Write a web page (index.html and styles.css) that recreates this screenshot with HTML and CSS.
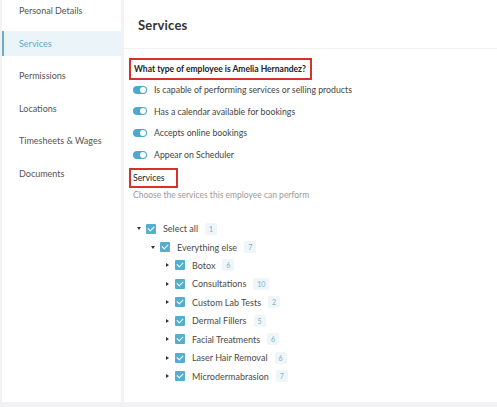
FILE: index.html
```html
<!DOCTYPE html>
<html>
<head>
<meta charset="utf-8">
<link rel="stylesheet" href="styles.css">
</head>
<body>
<div class="app">
  <nav class="sidebar">
    <div class="nav-item">Personal Details</div>
    <div class="nav-item active">Services</div>
    <div class="nav-item">Permissions</div>
    <div class="nav-item">Locations</div>
    <div class="nav-item">Timesheets &amp; Wages</div>
    <div class="nav-item">Documents</div>
  </nav>
  <main class="main">
    <header class="header"><h1 class="title">Services</h1></header>
    <section class="content">
      <div class="question"><span class="marked">What type of employee is Amelia Hernandez?</span></div>
      <div class="toggles">
        <div class="toggle-row"><span class="toggle"></span><span>Is capable of performing services or selling products</span></div>
        <div class="toggle-row"><span class="toggle"></span><span>Has a calendar available for bookings</span></div>
        <div class="toggle-row"><span class="toggle"></span><span>Accepts online bookings</span></div>
        <div class="toggle-row"><span class="toggle"></span><span>Appear on Scheduler</span></div>
      </div>
      <div class="sub-title"><span class="marked small">Services</span></div>
      <div class="hint">Choose the services this employee can perform</div>
      <div class="tree">
        <div class="tree-row lvl0"><span class="caret down"></span><span class="check"></span><span class="label">Select all</span><span class="badge">1</span></div>
        <div class="tree-row lvl1"><span class="caret down"></span><span class="check"></span><span class="label">Everything else</span><span class="badge">7</span></div>
        <div class="tree-row lvl2"><span class="caret"></span><span class="check"></span><span class="label">Botox</span><span class="badge">6</span></div>
        <div class="tree-row lvl2"><span class="caret"></span><span class="check"></span><span class="label">Consultations</span><span class="badge">10</span></div>
        <div class="tree-row lvl2"><span class="caret"></span><span class="check"></span><span class="label">Custom Lab Tests</span><span class="badge">2</span></div>
        <div class="tree-row lvl2"><span class="caret"></span><span class="check"></span><span class="label">Dermal Fillers</span><span class="badge">5</span></div>
        <div class="tree-row lvl2"><span class="caret"></span><span class="check"></span><span class="label">Facial Treatments</span><span class="badge">6</span></div>
        <div class="tree-row lvl2"><span class="caret"></span><span class="check"></span><span class="label">Laser Hair Removal</span><span class="badge">6</span></div>
        <div class="tree-row lvl2"><span class="caret"></span><span class="check"></span><span class="label">Microdermabrasion</span><span class="badge">7</span></div>
      </div>
    </section>
  </main>
</div>
</body>
</html>
```
FILE: styles.css
```css
* { box-sizing: border-box; }
html, body { margin: 0; padding: 0; }
body {
  background: #f2f2f4;
  font-family: Lato, "Open Sans", sans-serif;
  color: #444;
  width: 497px;
  height: 407px;
  overflow: hidden;
}
.app {
  display: flex;
  height: 402px;
  padding-left: 2px;
  gap: 3px;
}
.sidebar {
  width: 119px;
  background: #fff;
  display: flex;
  flex-direction: column;
  margin-top: -2px;
}
.nav-item {
  height: 25px;
  margin-bottom: 7.5px;
  display: flex;
  align-items: center;
  padding-left: 15px;
  font-size: 9px;
  color: #555;
  border-left: 2px solid transparent;
}
.nav-item.active {
  background: #eaf4f9;
  border-left-color: #6aaec6;
  color: #5fa9c4;
}
.main {
  flex: 1;
  background: #fff;
  display: flex;
  flex-direction: column;
}
.header {
  height: 49px;
  border-bottom: 1px solid #f0f0f2;
  display: flex;
  align-items: center;
  padding-left: 14px;
  padding-top: 1px;
}
.title {
  margin: 0;
  font-size: 13px;
  font-weight: 700;
  color: #333;
  letter-spacing: 0.2px;
}
.content {
  padding-left: 5px;
  padding-top: 7px;
}
.marked {
  display: inline-block;
  border: 2px solid #d5322c;
  padding: 3px 4px 3px 3px;
  font-size: 8.5px;
  font-weight: 700;
  color: #222;
  line-height: 12px;
}
.question { height: 22px; }
.toggles {
  padding-left: 4px;
  padding-top: 1px;
}
.toggle-row {
  height: 21.6px;
  display: flex;
  align-items: center;
  gap: 7px;
  font-size: 8.75px;
  color: #444;
}
.toggle {
  width: 14px;
  height: 8px;
  border-radius: 4px;
  background: #4fa7c9;
  position: relative;
  flex: none;
}
.toggle::after {
  content: "";
  position: absolute;
  right: 1px;
  top: 1px;
  width: 6px;
  height: 6px;
  border-radius: 50%;
  background: #fff;
}
.sub-title {
  height: 23px;
}
.marked.small {
  font-weight: 400;
  font-size: 8.75px;
  padding: 2px 11px 2px 2px;
}
.hint {
  padding-left: 4px;
  font-size: 8.5px;
  color: #9a9a9a;
  height: 14px;
  line-height: 14px;
}
.tree {
  margin-top: 17px;
}
.tree-row {
  height: 18.45px;
  display: flex;
  align-items: center;
  font-size: 9px;
  color: #4a4a4a;
}
.lvl0 { padding-left: 8px; }
.lvl1 { padding-left: 22px; }
.lvl2 { padding-left: 37px; }
.caret {
  width: 0;
  height: 0;
  margin-right: 6px;
  border-top: 2px solid transparent;
  border-bottom: 2px solid transparent;
  border-left: 3px solid #333;
  flex: none;
}
.caret.down {
  border-left: 2px solid transparent;
  border-right: 2px solid transparent;
  border-top: 3px solid #333;
  border-bottom: 0;
  margin-right: 5px;
}
.check {
  width: 10px;
  height: 10px;
  background: #54aed0;
  border-radius: 1px;
  position: relative;
  flex: none;
  margin-right: 7px;
}
.check::after {
  content: "";
  position: absolute;
  left: 3px;
  top: 1px;
  width: 3px;
  height: 5px;
  border-right: 1.2px solid #fff;
  border-bottom: 1.2px solid #fff;
  transform: rotate(45deg);
}
.badge {
  margin-left: 7px;
  font-size: 7px;
  color: #7ab0cc;
  background: #eef6fa;
  padding: 1px 4px;
  min-width: 12px;
  text-align: center;
  border-radius: 2px;
  line-height: 10px;
}
```
